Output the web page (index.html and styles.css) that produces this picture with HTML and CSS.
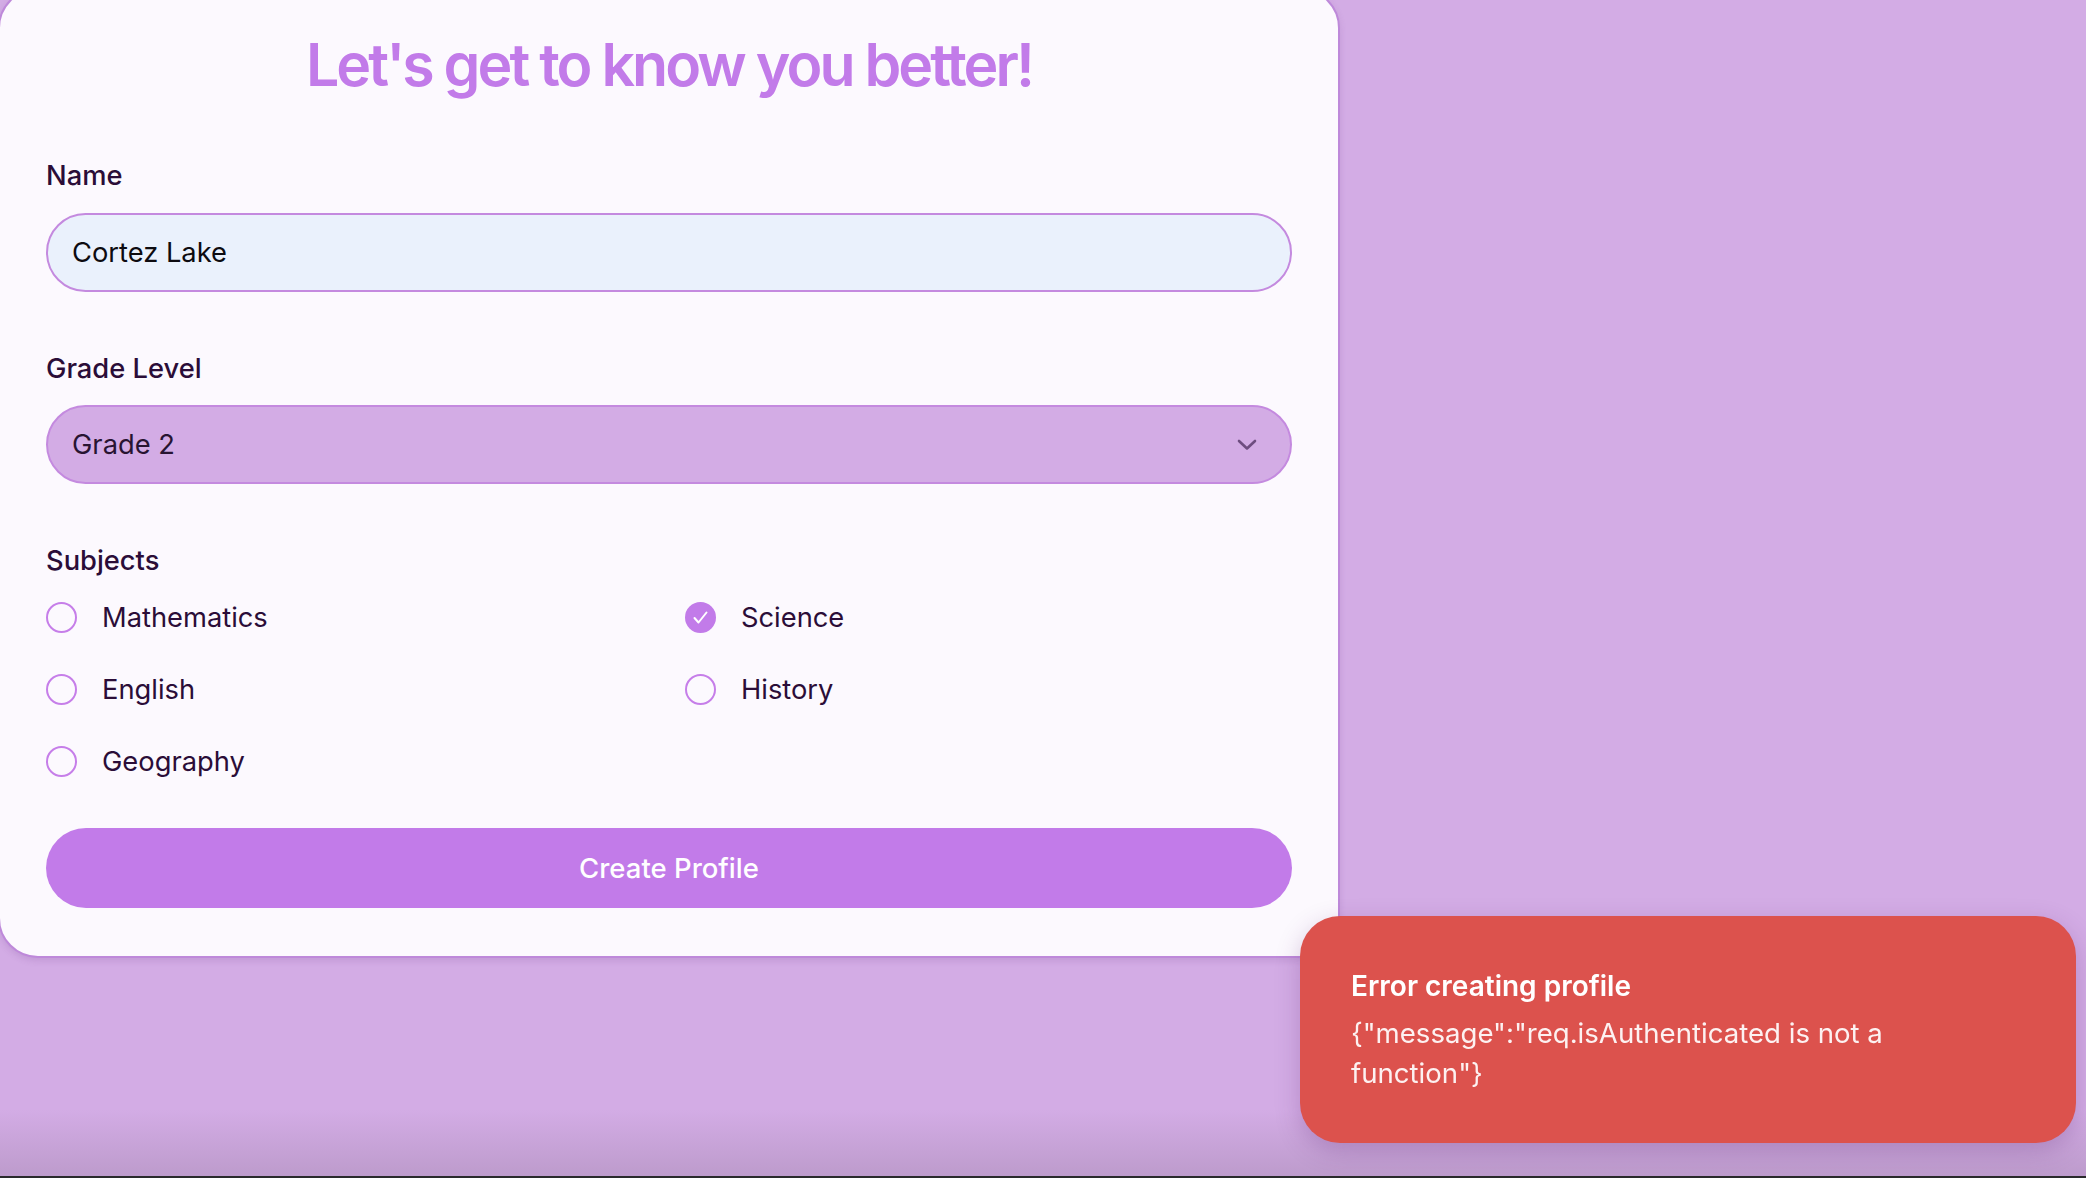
FILE: index.html
```html
<!DOCTYPE html>
<html lang="en">
<head>
<meta charset="utf-8">
<title>Create Profile</title>
<link rel="stylesheet" href="styles.css">
</head>
<body>
<main class="page">
  <section class="card">
    <h1 class="title">Let's get to know you better!</h1>
    <div class="field field-name">
      <label class="label label-name">Name</label>
      <div class="input">Cortez Lake</div>
    </div>
    <div class="field field-grade">
      <label class="label label-grade">Grade Level</label>
      <div class="select">
        <span>Grade 2</span>
        <svg class="chev" width="20" height="12" viewBox="0 0 20 12"><path d="M2 2 L10 9.5 L18 2" fill="none" stroke="#6e4d80" stroke-width="2.6" stroke-linecap="round" stroke-linejoin="round"/></svg>
      </div>
    </div>
    <div class="field field-subjects">
      <label class="label label-subjects">Subjects</label>
      <div class="subjects">
        <div class="opt"><span class="box"></span><span>Mathematics</span></div>
        <div class="opt"><span class="box checked"><svg width="31" height="31" viewBox="0 0 31 31"><path d="M9.5 16 L13.5 20.5 L21.5 10.5" fill="none" stroke="#fff" stroke-width="2" stroke-linecap="round" stroke-linejoin="round"/></svg></span><span>Science</span></div>
        <div class="opt"><span class="box"></span><span>English</span></div>
        <div class="opt"><span class="box"></span><span>History</span></div>
        <div class="opt"><span class="box"></span><span>Geography</span></div>
      </div>
    </div>
    <button class="btn">Create Profile</button>
  </section>
  <div class="spacer"></div>
  <div class="dock"></div>
</main>
<div class="toast">
  <div class="toast-title">Error creating profile</div>
  <div class="toast-msg">{"message":"req.isAuthenticated is not a function"}</div>
</div>
</body>
</html>
```

FILE: styles.css
```css
* { box-sizing: border-box; }
html, body { margin: 0; padding: 0; }
body {
  font-family: Inter, "Noto Sans", sans-serif;
  background: linear-gradient(to bottom, #d3ace5 0, #d3ace5 1110px, #bd9bcc 1176px);
  height: 1178px;
  overflow: hidden;
}
.page {
  height: 1178px;
  display: flex;
  flex-direction: column;
}
.card {
  width: 1342px;
  margin-top: -12px;
  margin-left: -2px;
  background: #fcf9fe;
  border: 2px solid #be89da;
  border-radius: 40px;
  padding: 39px 46px 48px 46px;
  box-shadow: 0 3px 6px rgba(120, 70, 150, 0.18);
}
.title {
  margin: 0 0 55px;
  text-align: center;
  font-size: 59px;
  line-height: 72px;
  font-weight: 600;
  letter-spacing: -0.05em;
  color: #c27be9;
}
.field-name { margin-bottom: 57px; }
.field-grade { margin-bottom: 56.5px; }
.field-subjects { margin-bottom: 46.5px; }
.label {
  display: block;
  font-size: 27.3px;
  line-height: 40px;
  font-weight: 500;
  color: #2b0d38;
  margin-bottom: 17px;
}
.label-grade { margin-bottom: 16px; }
.input, .select {
  height: 79px;
  border: 2px solid #c48adf;
  border-radius: 40px;
  padding: 0 33px 0 24px;
  display: flex;
  align-items: center;
  font-size: 27.3px;
  color: #0d0b10;
}
.input { background: #eaf1fc; }
.select {
  background: #d3ace5;
  justify-content: space-between;
  color: #281432;
}
.chev { display: block; }
.subjects {
  display: grid;
  grid-template-columns: 1fr 1fr;
  column-gap: 32px;
  row-gap: 32px;
}
.opt {
  display: flex;
  align-items: center;
  gap: 25px;
  font-size: 27.3px;
  line-height: 40px;
  color: #2b0d38;
}
.box {
  width: 31px;
  height: 31px;
  border: 2px solid #c67ee9;
  border-radius: 50%;
  flex: none;
  position: relative;
}
.box.checked {
  background: #c27be9;
  border-color: #c27be9;
}
.box svg { position: absolute; left: -2px; top: -2px; }
.btn {
  display: block;
  width: 100%;
  height: 80px;
  border: 0;
  border-radius: 40px;
  background: #c27be9;
  color: #fff;
  font-family: Inter, "Noto Sans", sans-serif;
  font-size: 27.5px;
  font-weight: 500;
}
.spacer { flex: 1; }
.dock { height: 2px; background: #2a2a2c; }
.toast {
  position: fixed;
  left: 1300px;
  top: 916px;
  width: 776px;
  height: 227px;
  background: #dc524d;
  border-radius: 40px;
  padding: 50px 51px;
  color: #fff;
  box-shadow: 0 8px 24px rgba(90, 40, 110, 0.25);
}
.toast-title {
  font-size: 28px;
  line-height: 40px;
  font-weight: 600;
}
.toast-msg {
  margin-top: 7px;
  max-width: 640px;
  font-size: 27.6px;
  line-height: 40px;
  color: rgba(255, 255, 255, 0.92);
}
```
